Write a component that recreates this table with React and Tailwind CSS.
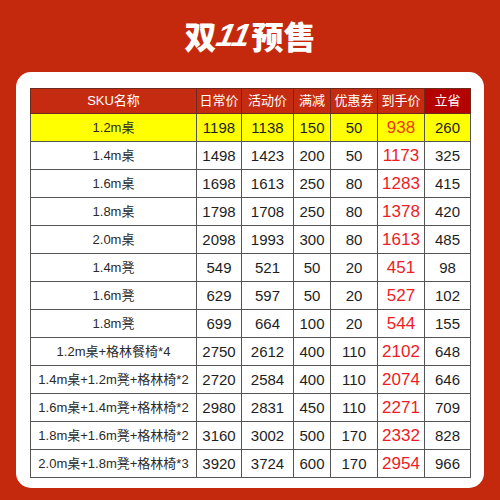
import React from "react";

const rows = [
  ["1.2m桌", "1198", "1138", "150", "50", "938", "260"],
  ["1.4m桌", "1498", "1423", "200", "50", "1173", "325"],
  ["1.6m桌", "1698", "1613", "250", "80", "1283", "415"],
  ["1.8m桌", "1798", "1708", "250", "80", "1378", "420"],
  ["2.0m桌", "2098", "1993", "300", "80", "1613", "485"],
  ["1.4m凳", "549", "521", "50", "20", "451", "98"],
  ["1.6m凳", "629", "597", "50", "20", "527", "102"],
  ["1.8m凳", "699", "664", "100", "20", "544", "155"],
  ["1.2m桌+格林餐椅*4", "2750", "2612", "400", "110", "2102", "648"],
  ["1.4m桌+1.2m凳+格林椅*2", "2720", "2584", "400", "110", "2074", "646"],
  ["1.6m桌+1.4m凳+格林椅*2", "2980", "2831", "450", "110", "2271", "709"],
  ["1.8m桌+1.6m凳+格林椅*2", "3160", "3002", "500", "170", "2332", "828"],
  ["2.0m桌+1.8m凳+格林椅*3", "3920", "3724", "600", "170", "2954", "966"],
];

const headers = ["SKU名称", "日常价", "活动价", "满减", "优惠券", "到手价", "立省"];
const widths = ["w-[166px]", "w-[45px]", "w-[52px]", "w-[37px]", "w-[47px]", "w-[47px]", "w-[46px]"];

export default function App() {
  return (
    <div
      className="w-[500px] h-[500px] bg-[#c4290d] flex flex-col items-center overflow-hidden"
      style={{ fontFamily: '"Liberation Sans", "Noto Sans CJK SC", sans-serif' }}
    >
      <div className="h-[72px] w-full flex items-center justify-center pb-[2px]">
        <div
          className="text-white text-[32px] font-black leading-none tracking-[0px] flex items-end"
          style={{ fontFamily: '"Noto Sans CJK SC", sans-serif' }}
        >
          <span>双</span>
          <span className="italic inline-block -skew-x-12 font-black px-[1px]" style={{ fontFamily: '"Liberation Sans", sans-serif' }}>11</span>
          <span>预售</span>
        </div>
      </div>
      <div className="w-[468px] h-[416px] bg-white rounded-[15px] pt-[16px] pl-[14px]">
        <table className="border-collapse table-fixed w-[440px]">
          <colgroup>
            {widths.map((w, i) => (
              <col key={i} className={w} />
            ))}
          </colgroup>
          <thead>
            <tr className="h-[25px]">
              {headers.map((h, i) => (
                <th
                  key={i}
                  className={`border border-[#6b2a1c] p-0 text-[13px] font-normal text-white text-center ${
                    i === 6 ? "bg-[#b30200]" : "bg-[#c52b10]"
                  }`}
                  style={{ fontFamily: '"Liberation Sans", "Noto Sans CJK SC", sans-serif' }}
                >
                  {h}
                </th>
              ))}
            </tr>
          </thead>
          <tbody>
            {rows.map((r, ri) => (
              <tr key={ri} className={`h-[28px] ${ri === 0 ? "bg-[#ffff00]" : "bg-white"}`}>
                {r.map((c, ci) => (
                  <td
                    key={ci}
                    className={`border border-[#555555] p-0 text-center whitespace-nowrap leading-none ${
                      ci === 0
                        ? "text-[13px] text-[#2a2a2a]"
                        : ci === 5
                        ? `text-[17px] ${ri === 0 ? "text-[#ee3a12]" : "text-[#ee1c25]"}`
                        : "text-[15px] text-[#1e1e1e]"
                    }`}
                  >
                    {c}
                  </td>
                ))}
              </tr>
            ))}
          </tbody>
        </table>
      </div>
    </div>
  );
}
